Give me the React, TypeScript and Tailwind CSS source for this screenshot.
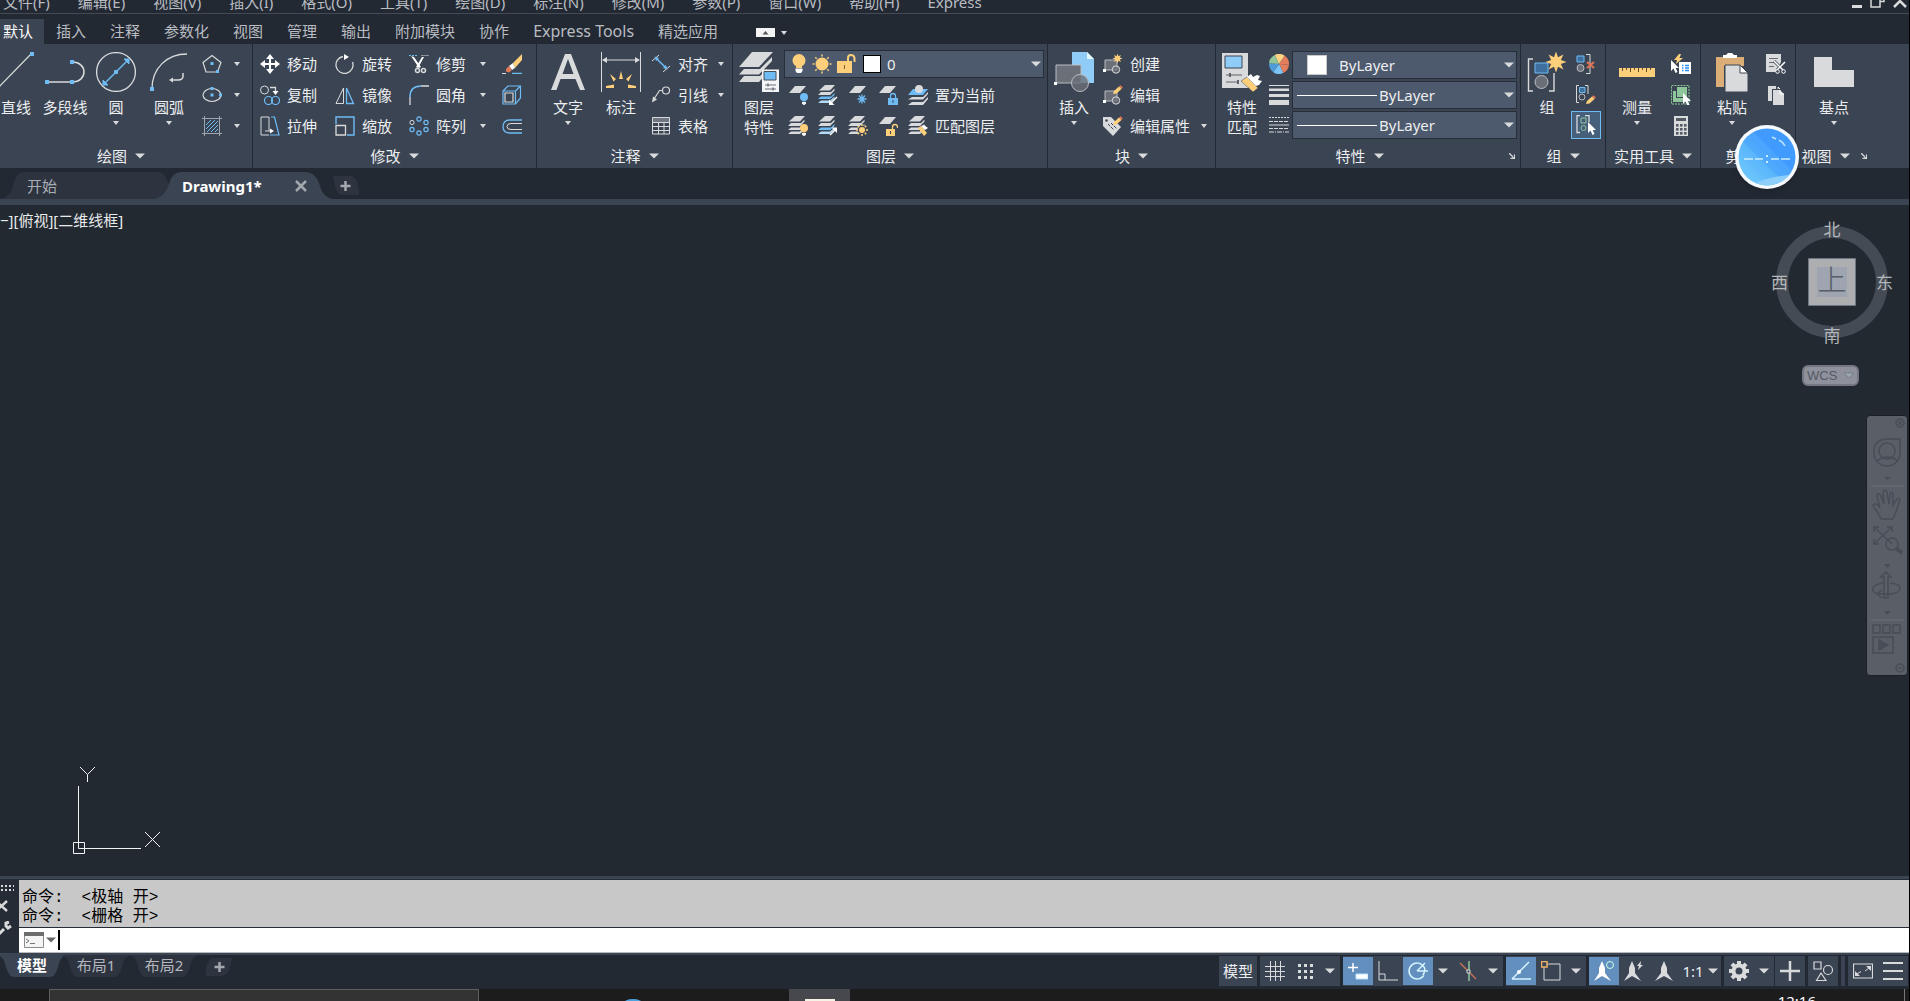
import React from 'react';

const MENUS = ['文件(F)', '编辑(E)', '视图(V)', '插入(I)', '格式(O)', '工具(T)', '绘图(D)', '标注(N)', '修改(M)', '参数(P)', '窗口(W)', '帮助(H)', 'Express'];
const RIBBON_TABS = ['插入', '注释', '参数化', '视图', '管理', '输出', '附加模块', '协作'];

const B = '#6fbcf5';
const W = '#d9dadb';
const Y = '#fdcf7b';
const D = '#3b4453';

interface IconProps {
  size?: number;
  w?: number;
  h?: number;
  children: React.ReactNode;
}

const Icon: React.FC<IconProps> = ({ size = 20, w, h, children }) => (
  <svg width={w ?? size} height={h ?? size} viewBox={`0 0 ${w ?? size} ${h ?? size}`} fill="none" className="shrink-0" aria-hidden="true">
    {children}
  </svg>
);

const Caret = ({ big = false }: { big?: boolean }) =>
  big ? (
    <Icon w={10} h={6}><path d="M0 0.500H10L5 5.500Z" fill={W} /></Icon>
  ) : (
    <Icon w={6} h={4}><path d="M0 0H6L3 4Z" fill={W} /></Icon>
  );

/* ---------- pieces shared by several icons ---------- */

const Bulb = ({ x, y, c }: { x: number; y: number; c: string }) => (
  <g transform={`translate(${x} ${y})`}>
    <circle cx="4" cy="4" r="4" fill={c} />
    <path d="M2.500 7H5.500V8.500H2.500Z" fill={c} />
    <path d="M2 9H6V10.500L4.500 12H3.500L2 10.500Z" fill="#f2f3f4" />
  </g>
);

const Stack = ({ last = W }: { last?: string }) => (
  <g>
    <path d="M7 0H17L12 5.500H1Z" fill={W} />
    <path d="M3 7H13L16.500 3.500V5.500L12 10H0Z" fill={W} />
    <path d="M3 11.500H13L16.500 8V10L12 14H0Z" fill={last} />
    <path d="M3 15.500H12L16.500 11.500V13.500L12 18H0Z" fill={last === W ? W : '#b5dcf7'} />
  </g>
);

const Sheet = () => <path d="M7 1H18L12 8H1Z" fill={W} />;

const Sun = ({ cx, cy, r }: { cx: number; cy: number; r: number }) => (
  <g>
    <circle cx={cx} cy={cy} r={r} fill={Y} />
    {[0, 45, 90, 135, 180, 225, 270, 315].map((a) => (
      <path key={a} d={`M${cx} ${cy - r - 1}V${cy - r - 3}`} stroke={Y} strokeWidth="1.500" transform={`rotate(${a} ${cx} ${cy})`} />
    ))}
  </g>
);

const Cursor = ({ x, y }: { x: number; y: number }) => (
  <path transform={`translate(${x} ${y})`} d="M0 0V11L2.500 8.500L4.500 13L6.500 12L4.700 8H8Z" fill="#fff" />
);

const Pencil = ({ x, y }: { x: number; y: number }) => (
  <g transform={`translate(${x} ${y})`}>
    <path d="M0 9L1 6L6 1.500L8.500 4L3.500 8.500Z" fill={Y} />
    <path d="M6 1.500L7.500 0.300L9.800 2.300L8.500 4Z" fill="#e07a54" />
  </g>
);

const Burst = ({ cx, cy, r }: { cx: number; cy: number; r: number }) => {
  const pts = Array.from({ length: 16 }, (_, i) => {
    const rad = i % 2 ? r * 0.5 : r;
    const a = (i * Math.PI) / 8;
    return `${cx + rad * Math.sin(a)},${cy - rad * Math.cos(a)}`;
  }).join(' ');
  return <polygon points={pts} fill={Y} />;
};

/* ---------- draw ---------- */

const LineIcon = () => (
  <Icon w={36} h={40}>
    <path d="M-2 38L33 2" stroke={W} strokeWidth="1.200" />
    <path d="M32 0H36V4H32Z" fill={B} />
  </Icon>
);

const PolylineIcon = () => (
  <Icon size={40}>
    <path d="M2 30H27C43 30 43 10 27 10" stroke={W} strokeWidth="1.500" />
    <path d="M0 28H4V32H0ZM25 28H29V32H25ZM25 8H29V12H25Z" fill={B} />
  </Icon>
);

const CircleIcon = () => (
  <Icon size={40}>
    <circle cx="20" cy="20" r="19.400" stroke={W} strokeWidth="1.300" />
    <path d="M9 31L31 9" stroke={B} strokeWidth="1.500" />
    <path d="M33 7V12L28 7ZM7 33V28L12 33ZM18.500 18.500H21.500V21.500H18.500Z" fill={B} stroke={B} />
  </Icon>
);

const ArcIcon = () => (
  <Icon size={40}>
    <path d="M3 37C3 16 18 2 38 2" stroke={W} strokeWidth="1.300" />
    <path d="M34 21V24Q34 28 29 28H22" stroke={W} strokeWidth="1.500" />
    <path d="M20 28L24 25.500V30.500Z" fill={W} />
    <path d="M1 35H5V39H1Z" fill={B} />
  </Icon>
);

const PolygonIcon = () => (
  <Icon>
    <path d="M10 1.500L19 8.500L15.500 18H4L1 8.500Z" stroke={W} strokeWidth="1.200" />
    <path d="M8.500 8H11.500V11H8.500ZM14 16H17V19H14Z" fill={B} />
  </Icon>
);

const EllipseIcon = () => (
  <Icon>
    <ellipse cx="10" cy="10" rx="9" ry="6.500" stroke={W} strokeWidth="1.200" />
    <path d="M8.500 8.500H11.500V11.500H8.500ZM8.500 2H11.500V5H8.500ZM17 8.500H20V11.500H17Z" fill={B} />
  </Icon>
);

const HatchIcon = () => (
  <Icon>
    <path d="M0 2.500H20M0 17.500H20M2.500 0V20M17.500 0V20" stroke="#9fa5ae" />
    <path d="M4 9L9 4M4 13L13 4M5 16L16 5M9 16L16 9M13 16L16 13" stroke={B} />
  </Icon>
);

/* ---------- modify ---------- */

const MoveIcon = () => (
  <Icon>
    <path d="M10 2V18M2 10H18" stroke="#fff" strokeWidth="2" />
    <path d="M10 0L14 5H6ZM10 20L14 15H6ZM0 10L5 6V14ZM20 10L15 6V14Z" fill="#fff" />
  </Icon>
);

const RotateIcon = () => (
  <Icon>
    <path d="M8 2.500A8.500 8.500 0 1 0 17.500 8" stroke={W} strokeWidth="1.300" />
    <path d="M9 0L14 3L9 6Z" fill="#fff" />
  </Icon>
);

const TrimIcon = () => (
  <Icon>
    <path d="M0 1.500H8" stroke={B} strokeDasharray="2 1" />
    <path d="M12 1.500H20" stroke="#8d939d" />
    <path d="M2 2L5 3L12 13L10 14ZM13 3H15L9 14L7 13Z" fill="#fff" />
    <circle cx="8.500" cy="16.500" r="2" stroke={W} strokeWidth="1.500" />
    <circle cx="14.500" cy="16.500" r="2" stroke={W} strokeWidth="1.500" />
  </Icon>
);

const EraseIcon = () => (
  <Icon>
    <path d="M11 9L20 0V6L13 14Z" fill={Y} />
    <path d="M7 12L11 9L13 14L10 16Z" fill="#fff" />
    <path d="M7 12L10 16L7 18.500L4 17.500V15Z" fill="#e07a54" />
    <path d="M0 19.500H4" stroke={W} />
    <path d="M10 19.500H20" stroke={B} strokeWidth="1.500" />
  </Icon>
);

const CopyIcon = () => (
  <Icon>
    <circle cx="4.500" cy="5" r="4" stroke={W} />
    <path d="M10 2.500H15.500V6" stroke={W} strokeWidth="1.300" />
    <path d="M12.500 6H18.500L15.500 10Z" fill="#fff" />
    <circle cx="8.500" cy="15.500" r="4" stroke={B} strokeWidth="1.200" />
    <circle cx="15.500" cy="15.500" r="4" stroke={B} strokeWidth="1.200" />
  </Icon>
);

const MirrorIcon = () => (
  <Icon>
    <path d="M8.500 3V18.500H1Z" stroke={W} />
    <path d="M11.500 3V18.500H18.500Z" stroke={B} strokeWidth="1.300" />
  </Icon>
);

const FilletIcon = () => (
  <Icon>
    <path d="M1 20V12M12 1H20" stroke={W} strokeWidth="1.300" />
    <path d="M1 12Q1 1 12 1" stroke={B} strokeWidth="1.500" />
  </Icon>
);

const ExplodeIcon = () => (
  <Icon>
    <path d="M3 8H11V17H3Z" stroke={W} strokeWidth="1.200" />
    <path d="M1 6L6 1H18.500V13L13.500 19H1V6H13.500V19M13.500 6L18.500 1" stroke={B} strokeWidth="1.200" />
  </Icon>
);

const StretchIcon = () => (
  <Icon>
    <path d="M9 15V1H1V19H9" stroke={W} />
    <path d="M11 1H14.500L19 19H10" stroke={B} strokeWidth="1.200" />
    <path d="M5 15H11" stroke={W} />
    <path d="M10 12.500L14 15L10 17.500Z" fill="#fff" />
  </Icon>
);

const ScaleIcon = () => (
  <Icon>
    <path d="M1 8V1H19V19H12" stroke={B} strokeWidth="1.400" />
    <path d="M1 9.500H10.500V19H1Z" stroke={W} strokeWidth="1.300" />
  </Icon>
);

const ArrayIcon = () => (
  <Icon>
    {[[10, 3], [17, 6.5], [17, 13.5], [10, 17], [3, 13.5]].map(([x, y]) => (
      <circle key={`${x}-${y}`} cx={x} cy={y} r="2.100" stroke={B} strokeWidth="1.200" />
    ))}
    <circle cx="3" cy="6.500" r="2.100" stroke={W} />
  </Icon>
);

const OffsetIcon = () => (
  <Icon>
    <path d="M20 4H8Q1 4 1 10.500T8 17H20" stroke={B} strokeWidth="1.300" />
    <path d="M20 7.500H9Q5 7.500 5 10.500T9 13.500H20" stroke={W} />
  </Icon>
);

/* ---------- annotate ---------- */

const TextIcon = () => (
  <Icon size={40}>
    <path d="M17 2H23L37 38H32L27.500 27H12.500L8.500 38H3ZM14.500 22H25.500L20 7Z" fill={W} fillRule="evenodd" />
  </Icon>
);

const DimIcon = () => (
  <Icon size={40}>
    <path d="M0.500 0V40M39.500 0V40M3 8H37" stroke={W} />
    <path d="M1 8L6 5V11ZM39 8L34 5V11Z" fill={W} />
    <path d="M20 19L22 27H18ZM9 22L15 27L12.500 29.500ZM31 22L25 27L27.500 29.500ZM5 34L13 32.500V36H5ZM35 34L27 32.500V36H35Z" fill={Y} />
  </Icon>
);

const AlignIcon = () => (
  <Icon>
    <path d="M1 7L8 1M12 18L19 12" stroke={W} />
    <path d="M5 4L15 14" stroke={B} strokeWidth="1.500" />
    <path d="M3.500 2.500L8 4L5 7ZM16.500 15.500L12 14L15 11Z" fill={B} />
  </Icon>
);

const LeaderIcon = () => (
  <Icon>
    <circle cx="15" cy="5.500" r="3.500" stroke={W} strokeWidth="1.200" />
    <path d="M11.500 5.500H8.500L3 14" stroke={W} strokeWidth="1.200" />
    <path d="M1 17.500L2 11.500L6 14.500Z" fill={W} />
  </Icon>
);

const TableIcon = () => (
  <Icon>
    <path d="M1 2H19V6H1Z" fill="#6f7682" />
    <path d="M1.500 1.500H18.500V18H1.500ZM1 6.500H19M1 10.500H19M1 14.500H19M7.500 6V18M13 6V18" stroke={W} />
  </Icon>
);

/* ---------- layers ---------- */

const LayerPropsIcon = () => (
  <Icon size={40}>
    <path d="M13 0H34L20 15H0Z" fill={W} />
    <path d="M5 17H21L33 5V9L20 22.500H0ZM5 24H21L28 17V21L20 30H0Z" fill={W} />
    <path d="M23 17.500H40V40H23Z" fill="#f4f5f6" />
    <path d="M25 19.500H37V28H25Z" fill={B} stroke="#4a4f58" />
    <path d="M26 33H37M26 37H37" stroke="#6b7079" />
    <path d="M29 31.500V34.500M34 35.500V38.500" stroke="#6b7079" strokeWidth="1.500" />
  </Icon>
);

const LayerOffIcon = () => <Icon><Sheet /><Bulb x={12} y={8} c={B} /></Icon>;
const LayerIsolateIcon = () => (
  <Icon><Stack last={B} /><path d="M19 12L13 18" stroke="#fff" strokeWidth="1.500" /><path d="M11 20V14.500L16.500 20Z" fill="#fff" /></Icon>
);
const LayerFreezeIcon = () => (
  <Icon><Sheet /><path d="M9.500 14H18.500M11 10.500L17 17.500M17 10.500L11 17.500M14 9.500V18.500" stroke={B} strokeWidth="1.300" /></Icon>
);
const LayerLockIcon = () => (
  <Icon><Sheet /><path d="M12.500 13V11Q12.500 8.500 15 8.500T17.500 11V13" stroke={B} strokeWidth="1.300" /><path d="M10 13H20V20H10Z" fill={B} /><path d="M15 15V18" stroke={D} /></Icon>
);
const LayerCurrentIcon = () => (
  <Icon>
    <path d="M5 4H20L15 10H0Z" fill={B} />
    <circle cx="11" cy="4" r="4" fill={W} />
    <path d="M4 12H15L20 7V9L15 14.500H0ZM4 17H15L20 12V14L15 20H0Z" fill={W} />
  </Icon>
);
const LayersOnIcon = () => <Icon><Stack /><Bulb x={12} y={8} c={Y} /></Icon>;
const LayersUnisolateIcon = () => (
  <Icon><Stack last={B} /><path d="M12 19L17 14" stroke="#fff" strokeWidth="1.500" /><path d="M19 11.500V17L13.500 11.500Z" fill="#fff" /></Icon>
);
const LayersThawIcon = () => <Icon><Stack /><circle cx="14" cy="14" r="4.500" fill={D} /><Sun cx={14} cy={14} r={3} /></Icon>;
const LayerUnlockIcon = () => (
  <Icon><Sheet /><path d="M14.500 13V11Q14.500 8.500 17 8.500T19.500 11V12" stroke={Y} strokeWidth="1.300" /><path d="M8 13H17V20H8Z" fill={Y} /><path d="M12.500 15V18" stroke={D} /></Icon>
);
const LayerMatchIcon = () => (
  <Icon><Stack /><path d="M10 12L13 10L19 17L16 20Z" fill={Y} /><path d="M13 10L16 9L20 12L17 14Z" fill="#fff" /></Icon>
);

/* ---------- block ---------- */

const InsertIcon = () => (
  <Icon size={40}>
    <path d="M18 0H33L40 7V31H18Z" fill="#8fcdf8" />
    <path d="M33 0L40 7H33Z" fill="#e5f6ff" />
    <path d="M2 13H27V31H2Z" fill="#6b6f78" stroke="#b9bcc1" />
    <circle cx="26" cy="31" r="8.500" fill="#6b6f78" fillOpacity="0.8" stroke="#b9bcc1" />
    <path d="M0 30H3V33H0Z" fill="#fff" />
  </Icon>
);

const BlockBase = () => (
  <g>
    <path d="M2 6H14V16H2Z" fill="#6b6f78" stroke="#b9bcc1" />
    <circle cx="13" cy="15.500" r="3.700" fill="#6b6f78" fillOpacity="0.7" stroke={W} />
    <path d="M0 15H3V18H0Z" fill="#fff" />
  </g>
);
const BlockCreateIcon = () => <Icon><BlockBase /><Burst cx={14.5} cy={4.5} r={5} /></Icon>;
const BlockEditIcon = () => <Icon><BlockBase /><Pencil x={10} y={0} /></Icon>;
const BlockAttrIcon = () => (
  <Icon>
    <path d="M0 1H8L18 11L10 20L0 10Z" fill={W} />
    <circle cx="3.500" cy="4.500" r="1.200" fill={D} />
    <path d="M5 8L11 14M8 7L14 13" stroke={D} strokeDasharray="3 1" />
    <Pencil x={10} y={0} />
  </Icon>
);

/* ---------- properties ---------- */

const MatchPropsIcon = () => (
  <Icon size={40}>
    <path d="M0 1H26V36H0Z" fill={W} />
    <path d="M3 4H20V16H3Z" fill="#8fcdf8" stroke="#3b4453" />
    <path d="M4 23H20M4 30H16" stroke="#5d626b" />
    <path d="M8 21V25M16 28V32" stroke="#5d626b" strokeWidth="2" />
    <path d="M19 29L25 25L36 36L31 40Z" fill={Y} stroke={D} strokeWidth="0.500" />
    <path d="M25 25L29 22L31 25L35 23L38 24L36 28L40 29L37 33L34 34Z" fill="#fff" />
  </Icon>
);

const ColorWheelIcon = () => {
  const colors = ['#fdd282', '#e27e5b', '#e27e5b', '#7cc4f5', '#4f9bd8', '#93c59b'];
  return (
    <Icon>
      {colors.map((c, i) => {
        const a = ((i * 60 - 25) * Math.PI) / 180;
        const b = ((i * 60 + 35) * Math.PI) / 180;
        return <path key={i} fill={c} d={`M10 10L${10 + 10 * Math.sin(a)} ${10 - 10 * Math.cos(a)}A10 10 0 0 1 ${10 + 10 * Math.sin(b)} ${10 - 10 * Math.cos(b)}Z`} />;
      })}
    </Icon>
  );
};

const WeightIcon = () => (
  <Icon><path d="M0 0H20V1H0ZM0 3.500H20V6H0ZM0 9H20V12H0ZM0 15H20V20H0Z" fill={W} /></Icon>
);

const LinetypeIcon = () => (
  <Icon>
    <path d="M0 1.500H20" stroke={W} strokeDasharray="2 1" />
    <path d="M0 5.500H20M0 12.500H20" stroke={W} strokeDasharray="4 1" />
    <path d="M0 9H20" stroke={W} />
    <path d="M0 16H20" stroke={W} strokeDasharray="5 1 1 1" />
  </Icon>
);

/* ---------- group / utilities / clipboard / view ---------- */

const GroupIcon = () => (
  <Icon size={40}>
    <path d="M6 7H1.500V39H6M22 39H27V21" stroke={W} strokeWidth="1.400" />
    <path d="M8 11H21V21H8Z" fill="#3f6f9d" stroke={B} />
    <circle cx="14.500" cy="30" r="6.500" fill="#6b6f78" stroke="#b9bcc1" />
    <Burst cx={29} cy={10} r={10.5} />
  </Icon>
);

const UngroupIcon = () => (
  <Icon>
    <path d="M1 2H8V8H1Z" fill="#3f6f9d" stroke={B} />
    <circle cx="4.500" cy="14" r="3.500" fill="#6b6f78" stroke="#b9bcc1" />
    <path d="M10 0.500H14V19.500H10" stroke={W} />
    <path d="M11 8L18 14M18 8L11 14" stroke="#e07354" strokeWidth="2.200" />
  </Icon>
);

const GroupEditIcon = () => (
  <Icon>
    <path d="M3 0.500H0.500V17.500H3M9 0.500H12V9" stroke={W} />
    <path d="M3.500 2.500H9V7.500H3.500Z" fill="#3f6f9d" stroke={B} />
    <circle cx="6" cy="12" r="3" stroke="#b9bcc1" />
    <Pencil x={10} y={10} />
  </Icon>
);

const GroupSelectIcon = () => (
  <Icon>
    <path d="M4 0.500H1V17.500H4M9 0.500H13V7" stroke={W} strokeWidth="1.300" />
    <path d="M5 3H10V8H5Z" stroke="#8fc59a" />
    <circle cx="7.500" cy="13" r="2.500" stroke="#8fc59a" />
    <Cursor x={12} y={7} />
  </Icon>
);

const MeasureIcon = () => (
  <Icon size={40}>
    <path d="M2 16H38V25H2Z" fill={Y} />
    <path d="M5.500 16V19M9.500 16V18M13.500 16V20M17.500 16V18M21.500 16V20M25.500 16V18M29.500 16V20M33.500 16V18" stroke="#5d4d33" />
  </Icon>
);

const QuickSelectIcon = () => (
  <Icon>
    <path d="M8 0L3 6H6L5 10L12 4H8.500L10 0Z" fill={Y} />
    <path d="M8 8H20V20H8Z" fill="#fff" />
    <path d="M11 11.500H12.500M11 14H12.500M11 16.500H12.500M14 11.500H18M14 14H18M14 16.500H18" stroke="#2a8ff0" strokeWidth="1.300" />
    <Cursor x={0} y={6} />
  </Icon>
);

const SelectAllIcon = () => (
  <Icon>
    <path d="M0.500 0.500H18V19H0.500Z" stroke="#8fc59a" strokeDasharray="2 1" />
    <path d="M6 2H16V12H6Z" fill="#8fc59a" />
    <path d="M2 6H5V13H13V17H2Z" fill="#8fc59a" />
    <Cursor x={12} y={8} />
  </Icon>
);

const CalcIcon = () => (
  <Icon>
    <path d="M3 0H17V20H3Z" fill={W} />
    <path d="M5 2H15V5H5Z" fill="#555b66" />
    {[8, 12, 16].map((y) => [5, 9, 13].map((x) => <rect key={`${x}-${y}`} x={x} y={y} width="2.600" height="2.600" fill="#555b66" />))}
  </Icon>
);

const PasteIcon = () => (
  <Icon size={40}>
    <path d="M4 5H32V14H12V35H4Z" fill="#dbae78" />
    <path d="M11 6V3H14L16 1H20L22 3H25V6Z" fill="#fff" />
    <path d="M13 13H28L36 21V40H13Z" fill={W} stroke={D} />
    <path d="M28 13V21H36Z" fill="#fff" stroke={D} />
  </Icon>
);

const CutClipIcon = () => (
  <Icon>
    <path d="M0 0H15V8L10 18H0Z" fill={W} />
    <path d="M3 4.500H12M3 8.500H10M3 12.500H8" stroke="#676c75" />
    <path d="M8 7L17 16M19 8L11 16" stroke={D} strokeWidth="3" />
    <path d="M8 7L17 16M19 8L11 16" stroke="#fff" strokeWidth="1.500" />
    <circle cx="11.500" cy="17.500" r="1.800" stroke="#fff" fill={D} />
    <circle cx="17.500" cy="17.500" r="1.800" stroke="#fff" fill={D} />
  </Icon>
);

const CopyClipIcon = () => (
  <Icon>
    <path d="M2 1H10V4H6V16H2Z" fill={W} />
    <path d="M7 5H14L18 9V20H7Z" fill={W} />
    <path d="M12 4V2L14 4M14 5V9H18" stroke="#fff" />
  </Icon>
);

const BaseIcon = () => <Icon size={40}><path d="M0 5H18V18H40V35H0Z" fill={W} /></Icon>;

const Launcher = () => (
  <Icon w={6} h={6}><path d="M0 0L4.500 4.500M1.500 5.500H5.500V1.500" stroke={W} strokeWidth="1.300" /></Icon>
);

/* ---------- ribbon building blocks ---------- */

interface PanelProps {
  title: string;
  className: string;
  inner?: string;
  foot?: string;
  caret?: boolean;
  launcher?: boolean;
  children: React.ReactNode;
}

const Panel: React.FC<PanelProps> = ({ title, className, inner = '', foot = '', caret = true, launcher = false, children }) => (
  <section className={`flex shrink-0 flex-col pt-[5px] ${className}`}>
    <div className={`flex flex-1 ${inner}`}>{children}</div>
    <div className={`flex h-6 items-center whitespace-nowrap ${foot}`}>
      <button className="mx-auto flex items-center gap-2">
        {title}
        {caret && <Caret big />}
      </button>
      {launcher && <button aria-label={`${title}设置`} className="mr-[5px] ml-[6px]"><Launcher /></button>}
    </div>
  </section>
);

interface BigProps {
  icon: React.ReactNode;
  label: string;
  label2?: string;
  caret?: boolean;
  className: string;
}

const Big: React.FC<BigProps> = ({ icon, label, label2, caret = false, className }) => (
  <button className={`flex shrink-0 flex-col items-center pt-[3px] whitespace-nowrap ${className}`}>
    {icon}
    <span className="mt-[5px]">{label}</span>
    {label2 && <span>{label2}</span>}
    {caret && <span className="mt-1"><Caret /></span>}
  </button>
);

const Col: React.FC<{ className?: string; children: React.ReactNode }> = ({ className = '', children }) => (
  <div className={`flex shrink-0 flex-col gap-px ${className}`}>{children}</div>
);

const Tool: React.FC<{ icon: React.ReactNode; label?: string; name?: string }> = ({ icon, label, name }) => (
  <button className="flex h-[30px] items-center gap-[7px] whitespace-nowrap" aria-label={label ? undefined : name}>
    {icon}
    {label}
  </button>
);

const Drop = ({ name }: { name: string }) => (
  <button className="flex h-[30px] items-center" aria-label={name}><Caret /></button>
);

const LinePicker = ({ name }: { name: string }) => (
  <label className="relative flex h-7 items-center border border-[#282e39] bg-[#4d596d] px-1">
    <span className="h-px w-20 bg-white" />
    <select aria-label={name} className="min-w-0 flex-1 appearance-none pl-[2px] text-[#eceef0] outline-none">
      <option>ByLayer</option>
    </select>
    <span className="pointer-events-none absolute right-[2px]"><Caret big /></span>
  </label>
);

const Ribbon = () => (
  <div className="flex h-[124px] shrink-0 bg-[#3b4453] text-[#eceef0] [&>section]:border-r [&>section]:border-[#222933] [&>section:last-child]:border-r-0">
    <Panel title="绘图" className="w-[253px]" foot="pr-[10px]">
      <Big icon={<LineIcon />} label="直线" className="-ml-[2px] w-9" />
      <Big icon={<PolylineIcon />} label="多段线" className="w-[62px]" />
      <Big icon={<CircleIcon />} label="圆" caret className="w-10" />
      <Big icon={<ArcIcon />} label="圆弧" caret className="w-[66px]" />
      <Col>
        <Tool icon={<PolygonIcon />} name="多边形" />
        <Tool icon={<EllipseIcon />} name="椭圆" />
        <Tool icon={<HatchIcon />} name="图案填充" />
      </Col>
      <Col className="ml-3">
        <Drop name="多边形选项" />
        <Drop name="椭圆选项" />
        <Drop name="填充选项" />
      </Col>
    </Panel>

    <Panel title="修改" className="w-[284px]" inner="pl-[7px]">
      <Col>
        <Tool icon={<MoveIcon />} label="移动" />
        <Tool icon={<CopyIcon />} label="复制" />
        <Tool icon={<StretchIcon />} label="拉伸" />
      </Col>
      <Col className="ml-[18px]">
        <Tool icon={<RotateIcon />} label="旋转" />
        <Tool icon={<MirrorIcon />} label="镜像" />
        <Tool icon={<ScaleIcon />} label="缩放" />
      </Col>
      <Col className="ml-[17px]">
        <Tool icon={<TrimIcon />} label="修剪" />
        <Tool icon={<FilletIcon />} label="圆角" />
        <Tool icon={<ArrayIcon />} label="阵列" />
      </Col>
      <Col className="ml-[14px]">
        <Drop name="修剪选项" />
        <Drop name="圆角选项" />
        <Drop name="阵列选项" />
      </Col>
      <Col className="ml-4">
        <Tool icon={<EraseIcon />} name="删除" />
        <Tool icon={<ExplodeIcon />} name="分解" />
        <Tool icon={<OffsetIcon />} name="偏移" />
      </Col>
    </Panel>

    <Panel title="注释" className="w-[196px]" inner="pl-[11px]">
      <Big icon={<TextIcon />} label="文字" caret className="w-10" />
      <Big icon={<DimIcon />} label="标注" className="ml-[13px] w-10" />
      <Col className="ml-[10px]">
        <Tool icon={<AlignIcon />} label="对齐" />
        <Tool icon={<LeaderIcon />} label="引线" />
        <Tool icon={<TableIcon />} label="表格" />
      </Col>
      <Col className="ml-[10px]">
        <Drop name="对齐选项" />
        <Drop name="引线选项" />
      </Col>
    </Panel>

    <Panel title="图层" className="w-[315px]" inner="pl-[6px]">
      <Big icon={<LayerPropsIcon />} label="图层" label2="特性" className="w-10" />
      <div className="mr-[3px] ml-[5px] flex flex-1 flex-col gap-px">
        <div className="flex h-[30px] items-center">
          <label className="relative flex h-7 flex-1 items-center border border-[#282e39] bg-[#4d596d] pl-[7px]">
            <Icon w={14} h={20}>
              <circle cx="7" cy="6.500" r="6.500" fill={Y} />
              <path d="M4 12H10V14H4Z" fill={Y} />
              <path d="M3.500 14.500H10.500V17L9 19H5L3.500 17Z" fill="#fff" />
            </Icon>
            <span className="ml-[6px]"><Icon><Sun cx={10} cy={10} r={6.5} /></Icon></span>
            <span className="ml-[5px]">
              <Icon>
                <path d="M11 8V4Q11 1 14 1T17.500 4V8" stroke={Y} strokeWidth="2" />
                <path d="M0 7H15V19H0Z" fill={Y} />
                <path d="M7.500 11V15" stroke="#7a6236" />
              </Icon>
            </span>
            <span className="ml-[6px] size-[18px] border border-black bg-white" />
            <select aria-label="图层" className="min-w-0 flex-1 appearance-none pl-[6px] outline-none">
              <option>0</option>
            </select>
            <span className="pointer-events-none absolute right-[2px]"><Caret big /></span>
          </label>
        </div>
        <div className="flex gap-[10px] pl-1">
          <Tool icon={<LayerOffIcon />} name="关" />
          <Tool icon={<LayerIsolateIcon />} name="隔离" />
          <Tool icon={<LayerFreezeIcon />} name="冻结" />
          <Tool icon={<LayerLockIcon />} name="锁定" />
          <Tool icon={<LayerCurrentIcon />} label="置为当前" />
        </div>
        <div className="flex gap-[10px] pl-1">
          <Tool icon={<LayersOnIcon />} name="打开所有图层" />
          <Tool icon={<LayersUnisolateIcon />} name="取消隔离" />
          <Tool icon={<LayersThawIcon />} name="解冻" />
          <Tool icon={<LayerUnlockIcon />} name="解锁" />
          <Tool icon={<LayerMatchIcon />} label="匹配图层" />
        </div>
      </div>
    </Panel>

    <Panel title="块" className="w-[168px]" inner="pl-[6px]">
      <Big icon={<InsertIcon />} label="插入" caret className="w-10" />
      <Col className="ml-[9px]">
        <Tool icon={<BlockCreateIcon />} label="创建" />
        <Tool icon={<BlockEditIcon />} label="编辑" />
        <Tool icon={<BlockAttrIcon />} label="编辑属性" />
      </Col>
      <Col className="ml-[11px] justify-end pb-[3px]">
        <Drop name="属性选项" />
      </Col>
    </Panel>

    <Panel title="特性" launcher className="w-[305px]" inner="pl-[6px]">
      <Big icon={<MatchPropsIcon />} label="特性" label2="匹配" className="w-10" />
      <Col className="ml-[7px]">
        <Tool icon={<ColorWheelIcon />} name="颜色" />
        <Tool icon={<WeightIcon />} name="线宽" />
        <Tool icon={<LinetypeIcon />} name="线型" />
      </Col>
      <div className="mr-[3px] ml-[3px] flex flex-1 flex-col gap-[2px] pt-[2px]">
        <label className="relative flex h-7 items-center border border-[#282e39] bg-[#4d596d] pl-[14px]">
          <span className="size-5 border border-[#c9c9c9] bg-white" />
          <select aria-label="对象颜色" className="min-w-0 flex-1 appearance-none pl-3 outline-none">
            <option>ByLayer</option>
          </select>
          <span className="pointer-events-none absolute right-[2px]"><Caret big /></span>
        </label>
        <LinePicker name="对象线宽" />
        <LinePicker name="对象线型" />
      </div>
    </Panel>

    <Panel title="组" className="w-[85px]" inner="pl-[6px]">
      <Big icon={<GroupIcon />} label="组" className="w-10" />
      <Col className="ml-1">
        <span className="px-[5px]"><Tool icon={<UngroupIcon />} name="解除编组" /></span>
        <span className="px-[5px]"><Tool icon={<GroupEditIcon />} name="组编辑" /></span>
        <button aria-label="启用组选择" className="flex h-7 items-center justify-center border border-[#6fbcf5] bg-[#46607c]"><GroupSelectIcon /></button>
      </Col>
    </Panel>

    <Panel title="实用工具" className="w-[95px]" inner="pl-[11px]">
      <Big icon={<MeasureIcon />} label="测量" caret className="w-10" />
      <Col className="ml-[14px]">
        <Tool icon={<QuickSelectIcon />} name="快速选择" />
        <Tool icon={<SelectAllIcon />} name="全部选择" />
        <Tool icon={<CalcIcon />} name="快速计算器" />
      </Col>
    </Panel>

    <Panel title="剪贴板" caret={false} className="w-[95px]" inner="pl-[11px]">
      <Big icon={<PasteIcon />} label="粘贴" caret className="w-10" />
      <Col className="ml-[14px]">
        <Tool icon={<CutClipIcon />} name="剪切" />
        <Tool icon={<CopyClipIcon />} name="复制剪裁" />
      </Col>
    </Panel>

    <Panel title="视图" launcher className="w-[76px]">
      <Big icon={<BaseIcon />} label="基点" caret className="mx-auto w-10" />
    </Panel>
  </div>
);

/* ---------- file tabs ---------- */

const FileTabs = () => (
  <div className="flex h-8 shrink-0 items-end border-b border-[#3b4453] text-[#a9adb4]">
    <a href="#start" className="relative flex h-[27px] w-[165px] items-center pl-[27px]">
      <svg className="absolute inset-y-0 left-0" width="172" height="27" aria-hidden="true"><path d="M0 27Q10 26 13 14Q16 0 24 0H157Q166 0 170 16L172 27Z" fill="#2d3440" /></svg>
      <span className="relative">开始</span>
    </a>
    <div className="relative flex h-[27px] w-[164px] items-center pl-[17px]">
      <svg className="absolute inset-y-0 -left-2.5" width="178" height="27" aria-hidden="true"><path d="M0 27Q10 25 14 12Q17 0 26 0H150Q161 0 165 14Q168 25 177 27Z" fill="#3b4453" /></svg>
      <a href="#drawing1" className="relative font-bold text-white">Drawing1*</a>
      <button aria-label="关闭 Drawing1" className="absolute right-[22px]">
        <Icon w={12} h={12}><path d="M1 1L11 11M11 1L1 11" stroke="#a3a7ae" strokeWidth="2.500" /></Icon>
      </button>
    </div>
    <button aria-label="新图形" className="relative mb-1 ml-1 h-[19px] w-[26px]">
      <svg width="26" height="19" aria-hidden="true">
        <path d="M0 0H18Q26 1 26 19H8Q2 17 0 0Z" fill="#2d3440" />
        <path d="M12.500 5V15M7.500 10H17.500" stroke="#a3a7ae" strokeWidth="2.500" />
      </svg>
    </button>
  </div>
);

/* ---------- drawing area ---------- */

const ViewCube = () => (
  <div className="absolute top-[13px] right-[13px] h-[128px] w-[126px] text-[17px] text-[#b4b7bb]">
    <svg className="absolute inset-0" width="126" height="128" aria-hidden="true">
      <circle cx="62" cy="64" r="50" fill="none" stroke="#454b54" strokeWidth="12" />
      <path d="M38.500 40.500H85.500V87.500H38.500Z" fill="#acaeb0" stroke="#6d7783" />
      <path d="M47 49H77V79H47Z" fill="#9ea4b0" />
    </svg>
    <span className="absolute top-[2px] right-[2px] left-0 text-center">北</span>
    <span className="absolute right-[2px] bottom-0 left-0 text-center">南</span>
    <span className="absolute top-[55px] left-px">西</span>
    <span className="absolute top-[55px] right-[3px]">东</span>
    <span className="absolute top-12 right-[2px] left-0 text-center font-['Liberation_Serif','Noto_Sans_CJK_SC',serif] text-[29px] leading-[30px] font-light text-[#565c68]">上</span>
  </div>
);

const NavBar = () => (
  <div className="absolute top-[210px] right-px w-[42px] rounded-[4px] border border-[#1b2027] bg-[#5a5f67] p-px">
    <svg width="38" height="257" viewBox="0 0 38 257" fill="none" stroke="#484d56" strokeWidth="1.500" aria-hidden="true">
      <circle cx="32" cy="6" r="4" /><path d="M30 4L34 8M34 4L30 8" />
      <path d="M6 35Q6 22 20 22H32V36A13 13 0 0 1 6 36Z" /><circle cx="19" cy="34" r="8" /><path d="M9 44Q19 36 30 44" />
      <path d="M16 60H23L19.500 63Z" fill="#484d56" stroke="none" />
      <path d="M3 69H36M3 203H36" stroke="#666b73" />
      <path d="M13 102C11 94 5 92 5 88C8 85 11 89 12 91L9 79C9 76 12 76 13 79L16 87L15 75C16 72 18 73 19 76L21 87L22 77C23 74 25 75 25 78V88L29 82C31 80 33 82 31 85L28 95L25 102Z" />
      <path d="M6 110L24 127M24 110L6 127M6 115V110H11M19 110H24V115M6 122V127H11" />
      <circle cx="24" cy="127" r="6" /><path d="M28 131L34 136" strokeWidth="4" />
      <path d="M16 147H23L19.500 151ZM16 194H23L19.500 198Z" fill="#484d56" stroke="none" />
      <path d="M16 181V160H13L18 155L23 160H20V181ZM15 166C2 168 2 175 10 177H22C36 175 35 167 22 166M14 173L9 177L14 181" />
      <path d="M5 208H12V216H5ZM15 208H22V216H15ZM25 208H32V216H25ZM5 220H25V236H5Z" />
      <path d="M11 223L20 228L11 233Z" fill="#484d56" />
      <circle cx="32" cy="251" r="4" /><path d="M30 251H34" />
    </svg>
  </div>
);

const DrawingArea = () => (
  <main className="relative min-h-0 flex-1 overflow-hidden bg-[#222931]">
    <div className="-ml-[5px] pt-[5px] leading-5 text-[#e8eaec]">[−][俯视][二维线框]</div>
    <ViewCube />
    <button className="absolute top-[160px] right-[50px] flex h-[21px] w-[57px] items-center gap-[6px] rounded-[6px] border-2 border-[#747781] bg-[#8e919c] pl-[3px] font-['Liberation_Sans',sans-serif] text-[13px] text-[#555963]">
      WCS
      <Icon w={12} h={7}><path d="M1 1H11L6 6Z" stroke="#747f88" fill="#9da6ae" /></Icon>
    </button>
    <NavBar />
    <svg className="absolute bottom-[22px] left-[73px]" width="88" height="88" fill="none" stroke="#f2f3f4" aria-hidden="true">
      <path d="M5.500 20V82.500H68M0.500 76.500H11.500V87.500H0.500Z" />
      <path d="M7 1L14.500 8.500L22 1M14.500 8.500V16M72 66L87 81M87 66L72 81" />
    </svg>
  </main>
);

/* ---------- command line ---------- */

const CommandLine = () => (
  <div className="flex shrink-0 border-t-[3px] border-[#3b4453] bg-[#262c36] font-['Liberation_Mono','Noto_Sans_CJK_SC',monospace] text-base text-black">
    <div className="flex w-[19px] shrink-0 flex-col items-start gap-[9px] pt-[6px] leading-none">
      <Icon w={14} h={6}><path d="M1 1H14M1 5H14" stroke={W} strokeWidth="2" strokeDasharray="2 2" /></Icon>
      <button aria-label="关闭命令行"><Icon w={8} h={12}><path d="M-4 1L7 11M7 1L-4 11" stroke={W} strokeWidth="2.500" /></Icon></button>
      <button aria-label="自定义"><Icon w={12} h={14}><path d="M-2 14L4 8M9 1L6 2V5L8 7L11 5" stroke={W} strokeWidth="3" /></Icon></button>
    </div>
    <div className="min-w-0 flex-1">
      <div className="mt-px h-[47px] bg-[#c8c8c8] pt-[9px] pl-[3px] leading-[19px]">
        <p className="flex gap-[18px]"><span>命令:</span><span>&lt;极轴 开&gt;</span></p>
        <p className="flex gap-[18px]"><span>命令:</span><span>&lt;栅格 开&gt;</span></p>
      </div>
      <div className="mt-px flex h-[25px] items-center border-b border-[#b9babc] bg-white pl-[5px]">
        <Icon w={20} h={16}>
          <path d="M0.500 0.500H19.500V15.500H0.500Z" fill="#f4f4f4" stroke="#8b8b8b" />
          <path d="M0 0H20V4H0Z" fill="#6d6d6d" />
          <path d="M2 7L5 9L2 11M6 11.500H11" stroke="#777" />
        </Icon>
        <span className="mx-[2px]"><Icon w={10} h={6}><path d="M0 0.500H10L5 5.500Z" fill="#666" /></Icon></span>
        <input aria-label="命令" className="h-5 min-w-0 flex-1 border-l-2 border-black bg-transparent outline-none" />
      </div>
    </div>
  </div>
);

/* ---------- status bar ---------- */

const LayoutTab: React.FC<{ label: string; active?: boolean }> = ({ label, active = false }) => (
  <button className={`relative flex h-[22px] w-[68px] items-center justify-center pb-[2px] ${active ? 'font-bold text-white' : 'text-[#b4b8be]'}`}>
    <svg className="absolute inset-y-0 left-0" width="68" height="22" aria-hidden="true">
      <path d="M0 0H68Q62 2 60 12Q57 22 52 22H16Q11 22 8 12Q6 2 0 0Z" fill={active ? '#3b4453' : '#2d3440'} />
    </svg>
    <span className="relative">{label}</span>
  </button>
);

const Toggle: React.FC<{ name: string; on?: boolean; children: React.ReactNode }> = ({ name, on = false, children }) => (
  <button aria-label={name} aria-pressed={on} className={`flex h-7 w-[30px] items-center justify-center ${on ? 'bg-[#628fbe]' : ''}`}>
    {children}
  </button>
);

const Cell: React.FC<{ children?: React.ReactNode; className?: string }> = ({ children, className = '' }) => (
  <div className={`flex h-[30px] items-center bg-[#3b4453] ${className}`}>{children}</div>
);

const More = ({ name }: { name: string }) => (
  <button aria-label={name} className="flex h-7 w-5 items-center justify-center"><Caret big /></button>
);

const StatusBar = () => (
  <footer className="flex h-9 shrink-0 items-start border-t-2 border-[#3b4453] text-[15px]">
    <div className="-ml-[2px] flex">
      <LayoutTab label="模型" active />
      <div className="-ml-1 flex">
        <LayoutTab label="布局1" />
        <LayoutTab label="布局2" />
      </div>
      <button aria-label="新建布局" className="ml-[6px]">
        <svg width="28" height="20" aria-hidden="true">
          <path d="M8 2H28Q26 19 18 20H2Q1 6 8 2Z" fill="#2d3440" />
          <path d="M15.500 6V16M10.500 11H20.500" stroke="#a3a7ae" strokeWidth="2.500" />
        </svg>
      </button>
    </div>
    <div className="mt-px mr-px ml-auto flex gap-[3px] text-[#eceef0]">
      <Cell><button className="w-[38px]">模型</button></Cell>
      <Cell>
        <Toggle name="栅格"><Icon><path d="M5.500 0V20M10.500 0V20M15.500 0V20M0 5.500H20M0 10.500H20M0 15.500H20" stroke={W} /></Icon></Toggle>
        <Toggle name="捕捉"><Icon>{[3, 9, 15].map((y) => [3, 9, 15].map((x) => <rect key={`${x}-${y}`} x={x} y={y} width="3" height="3" fill={W} />))}</Icon></Toggle>
        <More name="捕捉选项" />
      </Cell>
      <Cell>
        <Toggle name="动态输入" on><Icon><path d="M5 2V11M0 6.500H10" stroke="#fff" strokeWidth="1.500" /><path d="M8 13H20V18H8Z" fill="#fff" stroke="#b8e3ff" /></Icon></Toggle>
        <Toggle name="正交"><Icon><path d="M1 0V19H20M1 13H7V19" stroke={W} /></Icon></Toggle>
        <Toggle name="极轴追踪" on><Icon><path d="M16 6A8 8 0 1 0 16 14M9 10L17 2M9 10H20M16 6Q18 9 15 14" stroke="#d6f5ff" strokeWidth="1.500" /></Icon></Toggle>
        <More name="极轴选项" />
        <Toggle name="等轴测草图"><Icon><path d="M2 2L18 18" stroke="#c67355" strokeWidth="1.500" /><path d="M11 0V20" stroke="#8fc59a" strokeWidth="1.500" /><path d="M9 9H12V12H9Z" stroke={W} fill={D} /></Icon></Toggle>
        <More name="等轴测选项" />
      </Cell>
      <Cell>
        <Toggle name="对象捕捉追踪" on><Icon><path d="M1 18L18 1M1 18H20" stroke="#d6f5ff" strokeWidth="1.500" /><circle cx="8" cy="11" r="2" fill="#fff" /></Icon></Toggle>
        <Toggle name="对象捕捉"><Icon><path d="M3 3H19V19H3Z" stroke={W} /><path d="M0.500 0.500H6V6H0.500Z" stroke="#edb06e" fill={D} strokeWidth="1.500" /></Icon></Toggle>
        <More name="对象捕捉选项" />
      </Cell>
      <Cell>
        <Toggle name="注释可见性" on><Icon><path d="M8 0L11 7V12L17 20L8 15L0 20L5 12V7Z" fill="#fff" /><circle cx="16" cy="4" r="3.500" stroke="#c8ffe4" /></Icon></Toggle>
        <Toggle name="自动缩放"><Icon><path d="M8 0L11 7V12L17 20L8 15L0 20L5 12V7Z" fill={W} /><path d="M17 0L13 5H15L14 9L19 4H16.500Z" fill={W} /></Icon></Toggle>
        <Toggle name="注释比例"><Icon><path d="M10 0L13 7V12L19 20L10 15L1 20L7 12V7Z" fill={W} /></Icon></Toggle>
        <button className="flex w-[42px] items-center justify-center gap-1 whitespace-nowrap">1:1 <Caret big /></button>
      </Cell>
      <Cell>
        <Toggle name="工作空间">
          <Icon>
            <circle cx="10" cy="10" r="5.500" stroke={W} strokeWidth="4" />
            {[0, 45, 90, 135, 180, 225, 270, 315].map((a) => <path key={a} d="M8 0H12V4H8Z" fill={W} transform={`rotate(${a} 10 10)`} />)}
          </Icon>
        </Toggle>
        <More name="工作空间选项" />
      </Cell>
      <Cell className="-ml-[2px]"><Toggle name="注释监视器"><Icon><path d="M10 0V20M0 10H20" stroke={W} strokeWidth="2.500" /></Icon></Toggle></Cell>
      <Cell><Toggle name="隔离对象"><Icon><path d="M1 1H8V8H1ZM8 12L13 19.500H3.500Z" stroke={W} strokeWidth="1.200" /><circle cx="15" cy="9" r="4.500" stroke={W} strokeWidth="1.200" /></Icon></Toggle></Cell>
      <Cell className="w-1" />
      <Cell>
        <Toggle name="全屏显示"><Icon><path d="M0.500 3H19.500V17H0.500Z" stroke={W} strokeWidth="1.200" /><path d="M13 5H18V10ZM2 10V15H7Z" fill={W} /><path d="M16 7L12 10M4 13L8 10.500" stroke={W} /></Icon></Toggle>
        <Toggle name="自定义"><Icon><path d="M0 2H20M0 10H20M0 18H20" stroke={W} strokeWidth="2" /></Icon></Toggle>
      </Cell>
    </div>
  </footer>
);

const TaskBar = () => (
  <div className="flex h-3 shrink-0 overflow-hidden bg-[#1c1c1c]">
    <div className="ml-[49px] w-[430px] border border-b-0 border-[#5e5e5e] bg-[#333]" />
    <svg className="ml-[144px]" width="20" height="12" aria-hidden="true"><ellipse cx="10" cy="15" rx="10" ry="5" fill="#4da3e0" /></svg>
    <div className="ml-[146px] flex w-[61px] items-end justify-center bg-[#47484d]"><div className="h-[2px] w-[30px] bg-[#f6f3e6]" /></div>
    <span className="mt-1 mr-[88px] ml-auto leading-4 text-white">12:16</span>
    <div className="mr-1 w-px bg-[#777]" />
  </div>
);

const AssistBall = () => (
  <button aria-label="悬浮球" className="absolute top-[125px] right-[110px] z-10 size-16 rounded-full shadow-md">
    <svg width="64" height="64" viewBox="0 0 64 64" aria-hidden="true">
      <defs>
        <linearGradient id="ball" x1="0.850" y1="0.150" x2="0.150" y2="0.850">
          <stop offset="0.350" stopColor="#419bff" />
          <stop offset="0.360" stopColor="#4aa3fd" />
          <stop offset="0.600" stopColor="#50aafc" />
          <stop offset="0.610" stopColor="#5ab4fb" />
          <stop offset="1" stopColor="#6cc6fb" />
        </linearGradient>
        <clipPath id="ballClip"><circle cx="32" cy="32" r="28.500" /></clipPath>
      </defs>
      <circle cx="32" cy="32" r="32" fill="#f7fafc" />
      <circle cx="32" cy="32" r="28.500" fill="url(#ball)" />
      <path d="M20 58Q30 54 40 52T64 49V64H16Z" fill="#8ccffa" clipPath="url(#ballClip)" />
      <path d="M37 12L41 14M44 15Q48 17 50 21" stroke="#b9e2ff" strokeWidth="1.500" fill="none" />
      <path d="M9 34H18M20 34H28M36 34H44M46 34H55" stroke="#cdeeff" strokeWidth="1.500" />
      <path d="M31 30H33V32H31ZM31 36H33V38H31Z" fill="#cdeeff" />
    </svg>
  </button>
);

export default function App() {
  return (
    <div className="relative flex h-screen flex-col overflow-hidden border-r border-black bg-[#222933] font-['Noto_Sans','Noto_Sans_CJK_SC',sans-serif] text-[15px] leading-5">
      <header className="flex h-[14px] shrink-0 items-end border-b border-[#434a56] pl-[3px] text-[#b9bcc1]">
        <nav className="flex gap-7 pb-px whitespace-nowrap">
          {MENUS.map((m) => <a key={m} href={`#${m}`}>{m}</a>)}
        </nav>
        <div className="ml-auto flex gap-2 pr-[2px] pb-[5px]">
          <button aria-label="最小化"><Icon w={10} h={8}><path d="M0 6.500H10" stroke={W} strokeWidth="3" /></Icon></button>
          <button aria-label="还原"><Icon w={15} h={8}><path d="M1 0V7H10V0M10 1.500H14V0" stroke={W} strokeWidth="1.500" /></Icon></button>
          <button aria-label="关闭"><Icon w={14} h={8}><path d="M1 7L7 1L13 7" stroke={W} strokeWidth="2.500" /></Icon></button>
        </div>
      </header>

      <nav className="flex h-[30px] shrink-0 items-end whitespace-nowrap text-[#b9bcc1]">
        <a href="#默认" className="flex h-[25px] w-11 items-center bg-[#3b4453] pb-[2px] pl-[3px] text-white">默认</a>
        {RIBBON_TABS.map((t) => <a key={t} href={`#${t}`} className="flex h-[25px] items-center px-3 pb-[2px]">{t}</a>)}
        <a href="#express" className="flex h-[25px] items-center px-3 pb-[2px] text-base">Express Tools</a>
        <a href="#精选应用" className="flex h-[25px] items-center px-3 pb-[2px]">精选应用</a>
        <button aria-label="最小化功能区" className="mb-[7px] ml-[26px] flex items-center gap-[6px]">
          <Icon w={19} h={9}><path d="M0 0H19V9H0Z" fill="#f4f4f4" /><path d="M6.500 6.500L9.500 3L12.500 6.500Z" fill="#555" /></Icon>
          <Caret />
        </button>
      </nav>

      <Ribbon />
      <FileTabs />
      <div className="h-[5px] shrink-0 bg-[#3b4453]" />
      <DrawingArea />
      <CommandLine />
      <StatusBar />
      <TaskBar />
      <AssistBall />
    </div>
  );
}
